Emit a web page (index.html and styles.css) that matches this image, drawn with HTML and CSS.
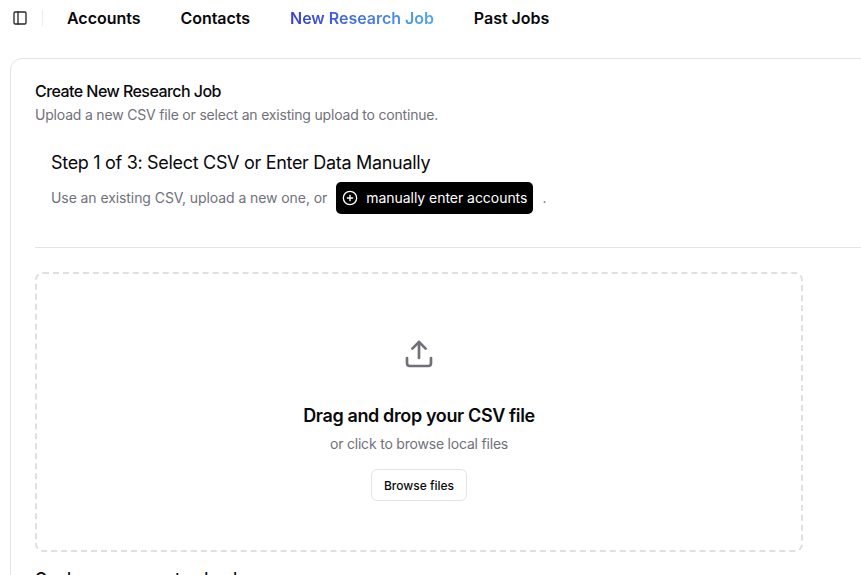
FILE: index.html
```html
<!DOCTYPE html>
<html>
<head>
    <title>New Research Job</title>
    <link rel="stylesheet" href="styles.css">
</head>
<body>
    <!-- Top Nav -->
    <header class="main-header">
        <button class="sidebar-btn">
            <svg width="16" height="16" viewBox="0 0 24 24" fill="none" stroke="currentColor" stroke-width="2" stroke-linecap="round" stroke-linejoin="round">
                <rect x="3" y="3" width="18" height="18" rx="2"></rect>
                <path d="M9 3v18"></path>
            </svg>
        </button>
        <span class="header-sep"></span>
        <nav class="header-nav">
            <a href="#" class="nav-link">Accounts</a>
            <a href="#" class="nav-link">Contacts</a>
            <a href="#" class="nav-link active">New Research Job</a>
            <a href="#" class="nav-link">Past Jobs</a>
        </nav>
    </header>

    <!-- Job Card -->
    <main class="job-card">
        <div class="job-header">
            <h2>Create New Research Job</h2>
            <p>Upload a new CSV file or select an existing upload to continue.</p>
        </div>

        <div class="step">
            <h3>Step 1 of 3: Select CSV or Enter Data Manually</h3>
            <div class="step-desc">
                <span>Use an existing CSV, upload a new one, or</span>
                <button class="manual-btn">
                    <svg width="16" height="16" viewBox="0 0 24 24" fill="none" stroke="currentColor" stroke-width="2" stroke-linecap="round" stroke-linejoin="round">
                        <circle cx="12" cy="12" r="10"></circle>
                        <path d="M8 12h8"></path>
                        <path d="M12 8v8"></path>
                    </svg>
                    manually enter accounts
                </button>
                <span>.</span>
            </div>
        </div>

        <hr class="divider">

        <div class="dropzone">
            <svg class="upload-icon" width="32" height="32" viewBox="0 0 24 24" fill="none" stroke="currentColor" stroke-width="2" stroke-linecap="round" stroke-linejoin="round">
                <path d="M21 15v4a2 2 0 0 1-2 2H5a2 2 0 0 1-2-2v-4"></path>
                <path d="M17 8l-5-5-5 5"></path>
                <path d="M12 3v12"></path>
            </svg>
            <h4>Drag and drop your CSV file</h4>
            <p>or click to browse local files</p>
            <button class="browse-btn">Browse files</button>
        </div>

        <h3 class="recent-title">Or choose a recent upload</h3>
    </main>
</body>
</html>
```

FILE: styles.css
```css
* {
    margin: 0;
    padding: 0;
    box-sizing: border-box;
    font-family: 'Inter', 'Liberation Sans', sans-serif;
}

body {
    background: white;
    color: #09090b;
    height: 575px;
    overflow: hidden;
}

button {
    border: none;
    background: none;
    cursor: pointer;
}

/* Top Nav */
.main-header {
    display: flex;
    align-items: center;
    height: 36px;
    padding-left: 12px;
}

.sidebar-btn {
    display: flex;
    color: #27272a;
}

.header-sep {
    width: 1px;
    height: 16px;
    margin-left: 14px;
    background: #ececee;
}

.header-nav {
    display: flex;
    gap: 40px;
    margin-left: 24px;
}

.nav-link {
    color: #09090b;
    font-size: 16px;
    font-weight: 600;
    letter-spacing: -0.03px;
    text-decoration: none;
}

.nav-link.active {
    background: linear-gradient(90deg, #3b3fd0 0%, #4fa9ea 100%);
    -webkit-background-clip: text;
    background-clip: text;
    color: transparent;
}

/* Job Card */
.job-card {
    width: 900px;
    height: 560px;
    margin: 22px 0 0 10px;
    padding: 23px 24px 24px;
    border: 1px solid #e4e4e7;
    border-radius: 12px;
}

.job-header h2 {
    font-size: 16px;
    font-weight: 500;
    line-height: 18px;
    letter-spacing: -0.55px;
}

.job-header p {
    margin-top: 5px;
    color: #71717a;
    font-size: 14px;
    line-height: 20px;
    letter-spacing: -0.19px;
}

.step {
    padding: 26px 16px 0;
}

.step h3 {
    font-size: 18px;
    font-weight: 400;
    line-height: 24px;
    letter-spacing: -0.31px;
}

.step-desc {
    display: flex;
    align-items: center;
    gap: 9px;
    margin-top: 7px;
    color: #71717a;
    font-size: 14px;
    letter-spacing: -0.08px;
}

.step-desc span {
    padding-bottom: 2px;
}

.manual-btn {
    display: flex;
    align-items: center;
    gap: 8px;
    height: 32px;
    padding: 0 6px 2px;
    background: black;
    border-radius: 5px;
    color: white;
    font-size: 14px;
    font-weight: 400;
    letter-spacing: -0.04px;
}

.manual-btn svg {
    margin-top: 2px;
}

.divider {
    margin-top: 33px;
    border: none;
    border-top: 1px solid #e4e4e7;
}

.dropzone {
    display: flex;
    flex-direction: column;
    align-items: center;
    width: 768px;
    height: 280px;
    margin-top: 24px;
    padding-top: 64px;
    border: 2px dashed #e0e0e3;
    border-radius: 8px;
}

.upload-icon {
    color: #71717a;
}

.dropzone h4 {
    margin-top: 32px;
    font-size: 18px;
    font-weight: 600;
    line-height: 28px;
    letter-spacing: -0.37px;
}

.dropzone p {
    margin-top: 4px;
    color: #71717a;
    font-size: 14px;
    line-height: 20px;
    letter-spacing: -0.2px;
}

.browse-btn {
    height: 32px;
    margin-top: 15px;
    padding: 0 12px;
    background: white;
    border: 1px solid #e4e4e7;
    border-radius: 6px;
    color: #09090b;
    font-size: 12px;
    font-weight: 500;
}

.recent-title {
    margin-top: 16px;
    font-size: 16px;
    font-weight: 500;
    line-height: 20px;
}
```
